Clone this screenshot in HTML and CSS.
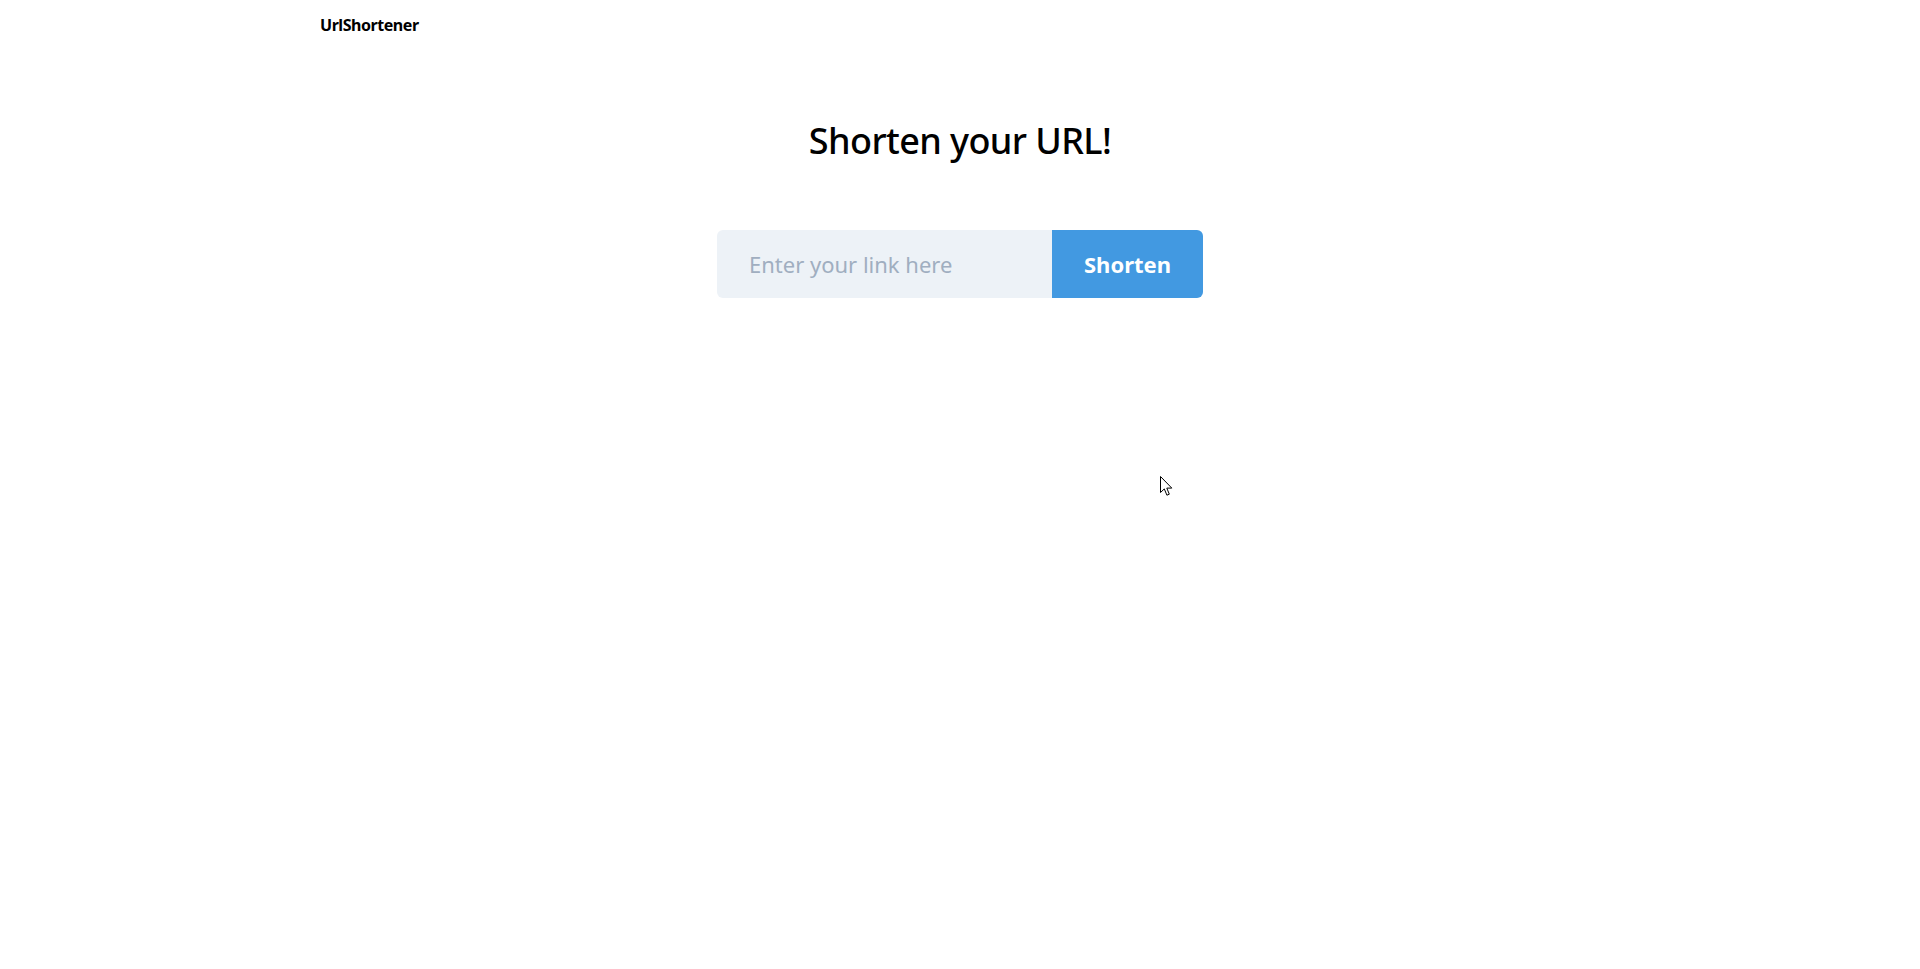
FILE: index.html
```html
<!DOCTYPE html>
<html lang="en">
<head>
<meta charset="utf-8">
<title>UrlShortener</title>
<link rel="stylesheet" href="styles.css">
</head>
<body>
<header class="topbar">
  <div class="container">
    <span class="brand">UrlShortener</span>
  </div>
</header>
<main class="hero">
  <h1 class="title">Shorten your URL!</h1>
  <form class="shorten-form" onsubmit="return false;">
    <input class="link-input" type="text" placeholder="Enter your link here">
    <button class="shorten-btn" type="submit">Shorten</button>
  </form>
</main>
<svg class="cursor" width="13" height="21" viewBox="0 0 13 21" aria-hidden="true">
  <path d="M0.5 0.5 L0.5 16.5 L4.3 12.9 L6.9 19.2 L9.3 18.2 L6.8 12.1 L11.8 12.1 Z" fill="#fff" stroke="#000" stroke-width="1" stroke-linejoin="miter"/>
</svg>
</body>
</html>
```

FILE: styles.css
```css
* { box-sizing: border-box; }

html, body {
  margin: 0;
  padding: 0;
  background: #ffffff;
  font-family: "Noto Sans", "Open Sans", "Liberation Sans", sans-serif;
  color: #000000;
}

body {
  position: relative;
  min-height: 969px;
}

.topbar {
  padding-top: 13px;
}

.container {
  width: 1280px;
  margin: 0 auto;
}

.brand {
  font-size: 16px;
  font-weight: 700;
  line-height: 24px;
  letter-spacing: -0.45px;
}

.hero {
  display: flex;
  flex-direction: column;
  align-items: center;
}

.title {
  margin: 80px 0 0;
  font-size: 36px;
  font-weight: 500;
  line-height: 48px;
  letter-spacing: -0.6px;
}

.shorten-form {
  display: flex;
  margin-top: 65px;
  height: 68px;
  border-radius: 6px;
  overflow: hidden;
}

.link-input {
  width: 335px;
  height: 68px;
  border: none;
  outline: none;
  background: #edf2f7;
  padding: 0 32px;
  font-family: inherit;
  font-size: 22px;
  color: #4a5568;
}

.link-input::placeholder {
  color: #a0aec0;
  opacity: 1;
}

.shorten-btn {
  width: 151px;
  height: 68px;
  border: none;
  background: #4299e1;
  color: #ffffff;
  font-family: inherit;
  font-size: 22px;
  font-weight: 700;
  padding: 0;
  cursor: pointer;
}

.cursor {
  position: absolute;
  left: 1160px;
  top: 476px;
}
```
